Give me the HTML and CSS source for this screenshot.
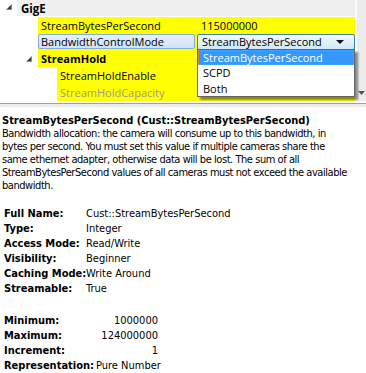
FILE: index.html
```html
<!DOCTYPE html>
<html>
<head>
<meta charset="utf-8">
<link rel="stylesheet" href="styles.css">
</head>
<body>
<div class="app">
  <div class="top">
    <div class="tree">
      <div class="row cat">
        <div class="gutter g1"><svg class="exp" width="6" height="6" viewBox="0 0 6 6"><polygon points="5.5,0.5 5.5,5.5 0.5,5.5" fill="#3c3c3c" stroke="#7a7a7a" stroke-width="0.6"/></svg></div>
        <div class="cells catcell"><span class="catlabel">GigE</span></div>
      </div>
      <div class="row">
        <div class="gutter g2"></div>
        <div class="cells"><div class="name n2">StreamBytesPerSecond</div><div class="val">115000000</div></div>
      </div>
      <div class="row">
        <div class="gutter g2"></div>
        <div class="cells"><div class="name n2"><span class="selbox">BandwidthControlMode</span></div>
          <div class="val"><div class="combo"><span>StreamBytesPerSecond</span><svg width="8" height="4" viewBox="0 0 8 4"><polygon points="0,0 8,0 4,4" fill="#111"/></svg></div></div>
        </div>
      </div>
      <div class="row">
        <div class="gutter g2 exp2wrap"><svg class="exp" width="6" height="6" viewBox="0 0 6 6"><polygon points="5.5,0.5 5.5,5.5 0.5,5.5" fill="#3c3c3c" stroke="#7a7a7a" stroke-width="0.6"/></svg></div>
        <div class="cells"><div class="name n2 bold">StreamHold</div></div>
      </div>
      <div class="row">
        <div class="gutter g3"></div>
        <div class="cells"><div class="name n3">StreamHoldEnable</div></div>
      </div>
      <div class="row last">
        <div class="gutter g3"></div>
        <div class="cells"><div class="name n3 dis">StreamHoldCapacity</div></div>
      </div>
      <div class="dropdown">
        <div class="opt on">StreamBytesPerSecond</div>
        <div class="opt">SCPD</div>
        <div class="opt">Both</div>
      </div>
    </div>
    <div class="vscroll"><svg width="7" height="4" viewBox="0 0 7 4"><polygon points="0,0 7,0 3.5,4" fill="#555"/></svg></div>
  </div>
  <div class="splitter"></div>
  <div class="desc">
    <div class="title">StreamBytesPerSecond (Cust::StreamBytesPerSecond)</div>
    <div class="text">Bandwidth allocation: the camera will consume up to this bandwidth, in<br>bytes per second. You must set this value if multiple cameras share the<br>same ethernet adapter, otherwise data will be lost. The sum of all<br>StreamBytesPerSecond values of all cameras must not exceed the available<br>bandwidth.</div>
    <div class="props p1">
      <div class="k">Full Name:</div><div class="v">Cust::StreamBytesPerSecond</div>
      <div class="k">Type:</div><div class="v">Integer</div>
      <div class="k">Access Mode:</div><div class="v">Read/Write</div>
      <div class="k">Visibility:</div><div class="v">Beginner</div>
      <div class="k">Caching Mode:</div><div class="v">Write Around</div>
      <div class="k">Streamable:</div><div class="v">True</div>
    </div>
    <div class="props p2">
      <div class="k">Minimum:</div><div class="v">1000000</div>
      <div class="k">Maximum:</div><div class="v">124000000</div>
      <div class="k">Increment:</div><div class="v">1</div>
      <div class="k">Representation:</div><div class="v">Pure Number</div>
    </div>
  </div>
</div>
</body>
</html>
```

FILE: styles.css
```css
html, body {
  margin: 0;
  padding: 0;
  background: #fff;
}
.app {
  width: 366px;
  height: 373px;
  overflow: hidden;
  background: #fff;
}
.top {
  display: flex;
  height: 101px;
}
.tree {
  position: relative;
  flex: 1;
  font-family: "Open Sans", "Liberation Sans", sans-serif;
  font-size: 11px;
  color: #000;
}
.row {
  display: flex;
  height: 16.8px;
}
.row.cat {
  height: 16px;
  margin-bottom: 1px;
}
.row.last {
  height: 17.2px;
}
.gutter {
  flex: none;
  position: relative;
}
.g1 { width: 17px; }
.g2 { width: 38px; }
.g3 { width: 57px; }
.exp {
  position: absolute;
  left: 6px;
  top: 4px;
}
.exp2wrap .exp {
  left: 26px;
  top: 5px;
}
.cells {
  flex: 1;
  display: flex;
  align-items: center;
  background: #ffff00;
}
.catcell {
  background: #f0f0f0;
}
.catlabel {
  font-weight: bold;
  padding-left: 4px;
  font-size: 11.5px;
}
.name {
  flex: none;
  height: 100%;
  display: flex;
  align-items: center;
  padding-left: 3px;
  box-sizing: border-box;
  white-space: nowrap;
}
.n2 { width: 159px; }
.n3 { width: 140px; }
.bold { font-weight: bold; }
.dis { color: #9a9a9a; }
.val {
  flex: 1;
  height: 100%;
  display: flex;
  align-items: center;
  padding-left: 4px;
}
.selbox {
  margin-left: -3px;
  padding-left: 2px;
  width: 157px;
  height: 15px;
  box-sizing: border-box;
  display: flex;
  align-items: center;
  border: 1px solid #84acdd;
  border-radius: 2px;
  background: linear-gradient(#e8f1fd, #cfe2fb);
  margin-top: -1px;
}
.combo {
  margin-left: -4px;
  width: 158px;
  height: 16px;
  box-sizing: border-box;
  border: 1px solid #3c7fb1;
  border-radius: 2px;
  background: linear-gradient(#f4fafe, #e1f1fb 50%, #cfe8f8);
  display: flex;
  align-items: center;
  justify-content: space-between;
  padding: 0 10px 0 4px;
  margin-top: -1px;
}
.dropdown {
  position: absolute;
  left: 197px;
  top: 49px;
  width: 158px;
  box-sizing: border-box;
  border: 1px solid #646464;
  background: #fff;
  box-shadow: 3px 3px 2px rgba(0, 0, 0, 0.45);
}
.opt {
  height: 15.3px;
  line-height: 15px;
  padding-left: 5px;
  box-sizing: border-box;
}
.opt.on {
  background: #3399ff;
  color: #fff;
  border: 1px dotted #e0883a;
  padding-left: 4px;
  line-height: 13px;
}
.vscroll {
  width: 11px;
  flex: none;
  background: #ececec;
  border-left: 2px solid #fbfbfb;
  box-sizing: border-box;
  display: flex;
  align-items: flex-end;
  justify-content: center;
  padding-bottom: 6px;
}
.splitter {
  height: 7px;
  box-sizing: border-box;
  border-top: 2px solid #fff;
  background: linear-gradient(#a0a0a0 0, #a0a0a0 1px, #e8e8e8 1px, #f0f0f0 4px, #fff 5px);
}
.desc {
  padding: 6px 2px 0;
  font-family: "DejaVu Sans Condensed", "DejaVu Sans", sans-serif;
  font-stretch: condensed;
  font-size: 11px;
  line-height: 13px;
  color: #000;
}
.title {
  font-weight: bold;
  white-space: nowrap;
}
.text {
  white-space: nowrap;
  letter-spacing: -0.45px;
}
.props {
  display: grid;
  padding-left: 2px;
  line-height: 14.9px;
}
.p1 {
  margin-top: 15px;
  grid-template-columns: 82px auto;
}
.p2 {
  margin-top: 18px;
  grid-template-columns: 92px 62px;
}
.k {
  font-weight: bold;
  white-space: nowrap;
}
.v {
  white-space: nowrap;
}
.p2 .v {
  text-align: right;
}
```
